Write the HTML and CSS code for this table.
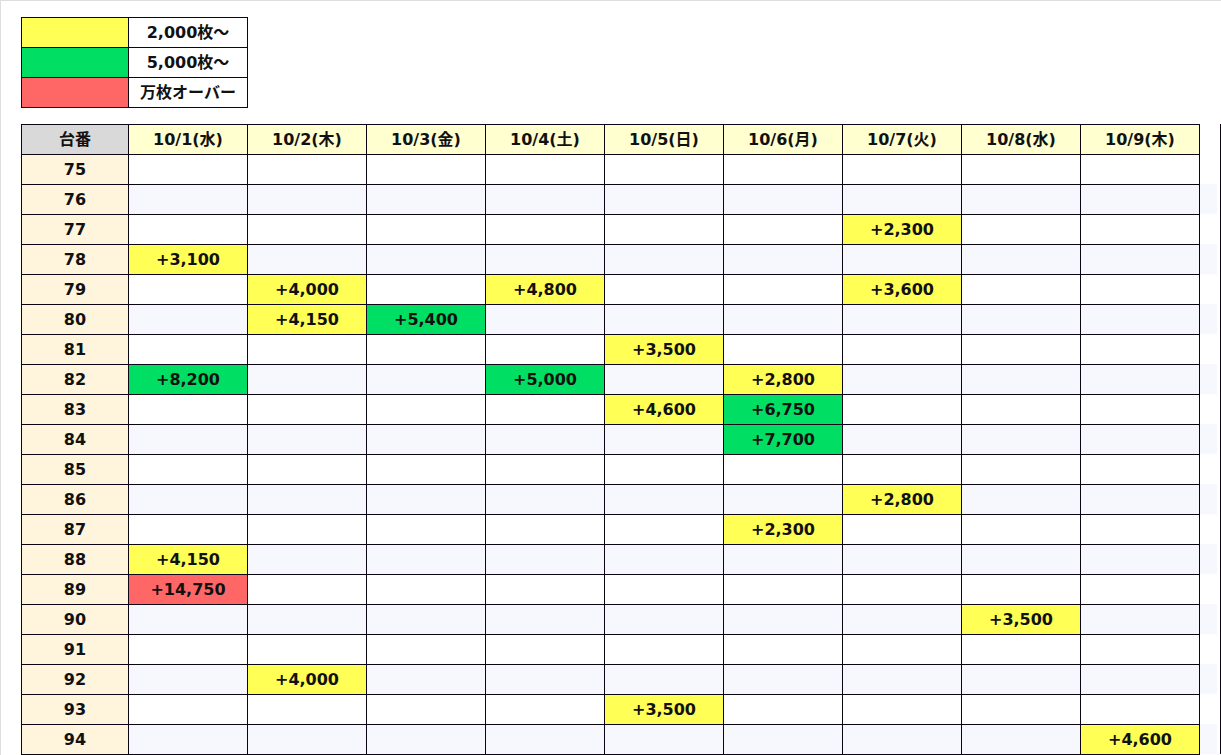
FILE: index.html
```html
<!DOCTYPE html>
<html lang="ja">
<head>
<meta charset="utf-8">
<title>台番データ</title>
<link rel="stylesheet" href="styles.css">
</head>
<body>
<div class="page">
  <table class="legend">
    <tr><td class="sw y"></td><td class="lbl">2,000枚〜</td></tr>
    <tr><td class="sw g"></td><td class="lbl">5,000枚〜</td></tr>
    <tr><td class="sw r"></td><td class="lbl">万枚オーバー</td></tr>
  </table>

  <div class="wrap">
    <table class="grid">
      <colgroup>
        <col class="c0"><col class="cd"><col class="cd"><col class="cd"><col class="cd"><col class="cd"><col class="cd"><col class="cd"><col class="cd"><col class="cd">
      </colgroup>
      <thead>
        <tr>
          <th class="hk">台番</th><th>10/1(水)</th><th>10/2(木)</th><th>10/3(金)</th><th>10/4(土)</th><th>10/5(日)</th><th>10/6(月)</th><th>10/7(火)</th><th>10/8(水)</th><th>10/9(木)</th>
        </tr>
      </thead>
      <tbody>
        <tr><th>75</th><td></td><td></td><td></td><td></td><td></td><td></td><td></td><td></td><td></td></tr>
        <tr class="ev"><th>76</th><td></td><td></td><td></td><td></td><td></td><td></td><td></td><td></td><td></td></tr>
        <tr><th>77</th><td></td><td></td><td></td><td></td><td></td><td></td><td class="y">+2,300</td><td></td><td></td></tr>
        <tr class="ev"><th>78</th><td class="y">+3,100</td><td></td><td></td><td></td><td></td><td></td><td></td><td></td><td></td></tr>
        <tr><th>79</th><td></td><td class="y">+4,000</td><td></td><td class="y">+4,800</td><td></td><td></td><td class="y">+3,600</td><td></td><td></td></tr>
        <tr class="ev"><th>80</th><td></td><td class="y">+4,150</td><td class="g">+5,400</td><td></td><td></td><td></td><td></td><td></td><td></td></tr>
        <tr><th>81</th><td></td><td></td><td></td><td></td><td class="y">+3,500</td><td></td><td></td><td></td><td></td></tr>
        <tr class="ev"><th>82</th><td class="g">+8,200</td><td></td><td></td><td class="g">+5,000</td><td></td><td class="y">+2,800</td><td></td><td></td><td></td></tr>
        <tr><th>83</th><td></td><td></td><td></td><td></td><td class="y">+4,600</td><td class="g">+6,750</td><td></td><td></td><td></td></tr>
        <tr class="ev"><th>84</th><td></td><td></td><td></td><td></td><td></td><td class="g">+7,700</td><td></td><td></td><td></td></tr>
        <tr><th>85</th><td></td><td></td><td></td><td></td><td></td><td></td><td></td><td></td><td></td></tr>
        <tr class="ev"><th>86</th><td></td><td></td><td></td><td></td><td></td><td></td><td class="y">+2,800</td><td></td><td></td></tr>
        <tr><th>87</th><td></td><td></td><td></td><td></td><td></td><td class="y">+2,300</td><td></td><td></td><td></td></tr>
        <tr class="ev"><th>88</th><td class="y">+4,150</td><td></td><td></td><td></td><td></td><td></td><td></td><td></td><td></td></tr>
        <tr><th>89</th><td class="r">+14,750</td><td></td><td></td><td></td><td></td><td></td><td></td><td></td><td></td></tr>
        <tr class="ev"><th>90</th><td></td><td></td><td></td><td></td><td></td><td></td><td></td><td class="y">+3,500</td><td></td></tr>
        <tr><th>91</th><td></td><td></td><td></td><td></td><td></td><td></td><td></td><td></td><td></td></tr>
        <tr class="ev"><th>92</th><td></td><td class="y">+4,000</td><td></td><td></td><td></td><td></td><td></td><td></td><td></td></tr>
        <tr><th>93</th><td></td><td></td><td></td><td></td><td class="y">+3,500</td><td></td><td></td><td></td><td></td></tr>
        <tr class="ev"><th>94</th><td></td><td></td><td></td><td></td><td></td><td></td><td></td><td></td><td class="y">+4,600</td></tr>
      </tbody>
    </table>
    <div class="edge">
      <div class="er"></div>
      <div class="er"></div><div class="er ev"></div><div class="er"></div><div class="er ev"></div><div class="er"></div>
      <div class="er ev"></div><div class="er"></div><div class="er ev"></div><div class="er"></div><div class="er ev"></div>
      <div class="er"></div><div class="er ev"></div><div class="er"></div><div class="er ev"></div><div class="er"></div>
      <div class="er ev"></div><div class="er"></div><div class="er ev"></div><div class="er"></div><div class="er ev"></div>
    </div>
  </div>
</div>
</body>
</html>
```

FILE: styles.css
```css
html, body {
  margin: 0;
  padding: 0;
  background: #ffffff;
}
body {
  font-family: "DejaVu Sans", "Noto Sans CJK JP", sans-serif;
  font-weight: bold;
  font-size: 16px;
  color: #111111;
  overflow: hidden;
}
.page {
  border-top: 1px solid #dedede;
  border-left: 1px solid #dedede;
  padding: 16px 0 0 20px;
  height: 760px;
  box-sizing: border-box;
}
table {
  border-collapse: collapse;
  table-layout: fixed;
}
td, th {
  border: 1px solid #0c0514;
  padding: 1px 0 0 0;
  height: 28px;
  text-align: center;
  vertical-align: middle;
  font-weight: bold;
  line-height: 1;
}
.legend {
  width: 227px;
}
.legend .sw { width: 106px; }
.legend .lbl { width: 118px; background: #fff; }
.y { background: #ffff55; }
.g { background: #00df64; }
.r { background: #ff6666; }

.wrap {
  display: flex;
  margin-top: 16px;
  align-items: flex-start;
}
.grid { width: 1179px; flex: none; }
.c0 { width: 107px; }
.cd { width: 119px; }
.grid thead th {
  background: #ffffcf;
}
.grid thead th.hk {
  background: #d9d9d9;
}
.grid tbody th {
  background: #fff4dc;
}
.grid tbody tr.ev td:not(.y):not(.g):not(.r) {
  background: #f7f8fe;
}
.edge {
  width: 20px;
  border-right: 1px solid #0c0514;
  flex: none;
}
.er {
  height: 30px;
  width: 17px;
}
.er.ev {
  background: #f7f8fe;
}
```
